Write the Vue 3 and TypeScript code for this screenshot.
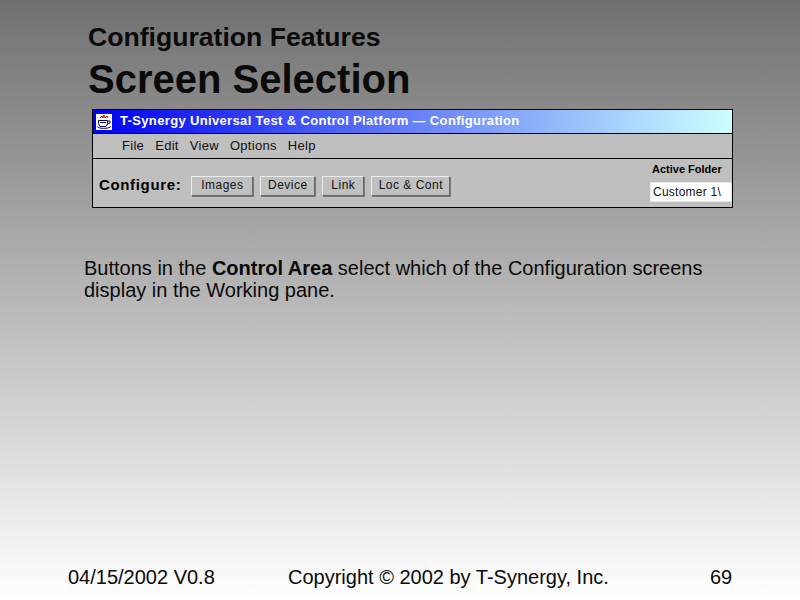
<template>
  <div class="slide">
    <header class="heading">
      <h2>Configuration Features</h2>
      <h1>Screen Selection</h1>
    </header>

    <section class="window">
      <div class="titlebar">
        <svg class="app-icon" width="16" height="16" viewBox="0 0 16 16">
          <rect width="16" height="16" fill="#fff" />
          <path d="M4 4l2-2 1 2 1-3 1 3 2-2 1 2" stroke="#e01010" stroke-width="1" fill="none" />
          <path d="M2.5 6.5h9v3l-1.5 3h-6l-1.5-3z" fill="#fff" stroke="#000060" stroke-width="1" />
          <path d="M4 8.5h6M11.5 7h2.5v2l-3 1.5M1 12.5c1 2.5 12 2.5 14 0" stroke="#000060" stroke-width="1" fill="none" />
        </svg>
        <span class="title-text">T-Synergy Universal Test &amp; Control Platform — Configuration</span>
      </div>

      <nav class="menubar">
        <span v-for="item in menuItems" :key="item">{{ item }}</span>
      </nav>

      <div class="controls">
        <strong class="configure">Configure:</strong>
        <button v-for="btn in buttons" :key="btn.label" class="btn" :style="{ width: btn.width + 'px' }">{{ btn.label }}</button>
        <div class="folder">
          <span class="folder-label">Active Folder</span>
          <div class="folder-value">Customer 1\</div>
        </div>
      </div>
    </section>

    <p class="body-text">
      Buttons in the <b>Control Area</b> select which of the Configuration screens display in the Working pane.
    </p>

    <footer class="footer">
      <span class="date">04/15/2002 V0.8</span>
      <span class="copy">Copyright © 2002 by T-Synergy, Inc.</span>
      <span class="page">69</span>
    </footer>
  </div>
</template>

<script setup lang="ts">
const menuItems: string[] = ['File', 'Edit', 'View', 'Options', 'Help']

const buttons = [
  { label: 'Images', width: 62 },
  { label: 'Device', width: 55 },
  { label: 'Link', width: 42 },
  { label: 'Loc & Cont', width: 79 }
]
</script>

<style>
html,
body {
  margin: 0;
  padding: 0;
}
</style>

<style scoped>
.slide {
  width: 800px;
  height: 600px;
  box-sizing: border-box;
  overflow: hidden;
  display: flex;
  flex-direction: column;
  padding-top: 22px;
  background: linear-gradient(180deg, #707070 0%, #ffffff 100%);
  font-family: "Liberation Sans", Arial, sans-serif;
  color: #000;
}

.heading {
  padding-left: 88px;
}

.heading h2 {
  margin: 0;
  font-size: 26.6px;
  line-height: 30px;
  font-weight: bold;
  color: #0a0a0a;
}

.heading h1 {
  margin: 6px 0 0;
  font-size: 40px;
  line-height: 42px;
  font-weight: bold;
  color: #0a0a0a;
}

.window {
  margin: 9px 0 0 92px;
  width: 641px;
  height: 99px;
  box-sizing: border-box;
  border: 1px solid #000;
  background: #bfbfbf;
  display: flex;
  flex-direction: column;
}

.titlebar {
  height: 24px;
  flex: none;
  box-sizing: border-box;
  border-bottom: 1px solid #000;
  display: flex;
  align-items: center;
  gap: 8px;
  padding-left: 3px;
  background: linear-gradient(90deg, #0000f0 0%, #ccffff 100%);
  color: #fff;
  font-size: 13px;
  font-weight: bold;
  letter-spacing: 0.35px;
}

.title-text {
  padding-bottom: 2px;
}

.menubar {
  height: 25px;
  flex: none;
  box-sizing: border-box;
  border-bottom: 1px solid #000;
  display: flex;
  align-items: center;
  gap: 11px;
  padding: 0 0 2px 29px;
  font-size: 13px;
  letter-spacing: 0.3px;
  color: #111;
}

.controls {
  flex: 1;
  display: flex;
  align-items: center;
  padding: 5px 0 0 6px;
  position: relative;
}

.configure {
  font-size: 15px;
  font-weight: bold;
  margin-right: 10px;
  padding-bottom: 2px;
  letter-spacing: 0.65px;
}

.btn {
  height: 20px;
  margin-right: 7px;
  padding: 0 0 2px;
  box-sizing: border-box;
  font-family: inherit;
  font-size: 12px;
  color: #111;
  letter-spacing: 0.5px;
  background: #c0c0c0;
  border: 1px solid;
  border-color: #ececec #6a6a6a #6a6a6a #ececec;
  box-shadow: 1px 1px 0 #777;
}

.folder {
  margin: -5px 0 0 auto;
  width: 82px;
  align-self: stretch;
  display: flex;
  flex-direction: column;
}

.folder-label {
  font-size: 11px;
  font-weight: bold;
  line-height: 14px;
  margin-top: 3px;
  padding-left: 2px;
}

.folder-value {
  margin-top: 6px;
  height: 20px;
  box-sizing: border-box;
  line-height: 18px;
  background: #fff;
  border: 1px solid #e8e8e8;
  padding-left: 2px;
  font-size: 12px;
  letter-spacing: 0.25px;
  color: #111;
}

.body-text {
  margin: 49px 0 0 84px;
  width: 630px;
  font-size: 20px;
  line-height: 22px;
  color: #0a0a0a;
}

.footer {
  margin-top: auto;
  height: 34px;
  display: flex;
  font-size: 20px;
  line-height: 22px;
  color: #0a0a0a;
}

.date {
  margin-left: 68px;
  width: 220px;
}

.copy {
  width: 422px;
}
</style>
